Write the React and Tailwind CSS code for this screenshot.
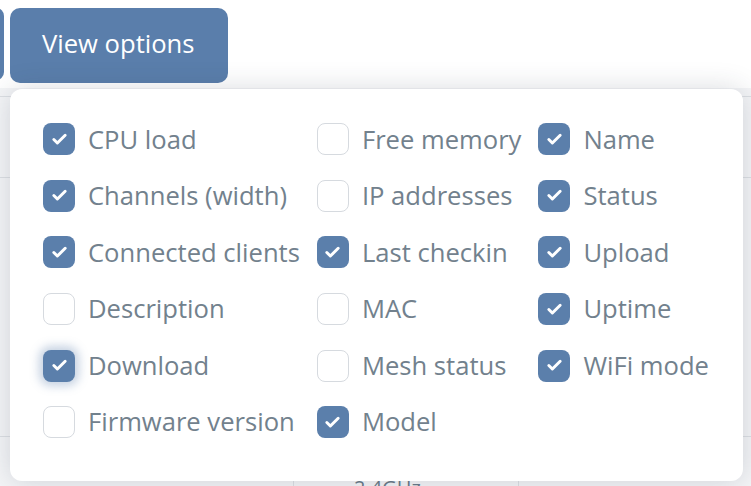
import React from "react";
import { Check } from "lucide-react";

const columns = [
  [
    { label: "CPU load", on: true },
    { label: "Channels (width)", on: true },
    { label: "Connected clients", on: true },
    { label: "Description", on: false },
    { label: "Download", on: true, focus: true },
    { label: "Firmware version", on: false },
  ],
  [
    { label: "Free memory", on: false },
    { label: "IP addresses", on: false },
    { label: "Last checkin", on: true },
    { label: "MAC", on: false },
    { label: "Mesh status", on: false },
    { label: "Model", on: true },
  ],
  [
    { label: "Name", on: true },
    { label: "Status", on: true },
    { label: "Upload", on: true },
    { label: "Uptime", on: true },
    { label: "WiFi mode", on: true },
  ],
];

function Option({ label, on, focus }) {
  return (
    <label className="flex items-center gap-[13px] h-[56.6px] whitespace-nowrap">
      <span
        className={
          on
            ? "flex items-center justify-center w-[32px] h-[32px] rounded-[8px] bg-[#5b7fab]" +
              (focus ? " shadow-[0_0_10px_4px_rgba(91,127,171,0.35)]" : "")
            : "w-[32px] h-[32px] rounded-[8px] border-[1.5px] border-[#d6dadf] bg-white"
        }
      >
        {on && <Check className="w-[17px] h-[17px] text-white" strokeWidth={4.2} />}
      </span>
      <span className="text-[25.6px] text-[#72818d] leading-none">{label}</span>
    </label>
  );
}

export default function App() {
  return (
    <div
      className="relative w-[751px] h-[486px] overflow-hidden bg-white"
      style={{ fontFamily: '"Open Sans", "Noto Sans", sans-serif' }}
    >
      {/* Toolbar */}
      <div className="flex items-start pt-[8px] h-[88px]">
        <div className="w-[100px] h-[72px] -ml-[96px] rounded-[8px] bg-[#5a7eab]" />
        <button className="ml-[6px] h-[75px] w-[218px] rounded-[10px] bg-[#5a7eab] text-white text-[25.6px] text-left pl-[32px] pb-[2px]">
          View options
        </button>
      </div>

      {/* Table behind */}
      <div className="bg-[#f4f5f7]">
        <div className="h-[9px] border-b border-[#dcdfe3]" />
        <div className="h-[81px] border-b border-[#dcdfe3]" />
        <div className="h-[259px] border-b border-[#dcdfe3]" />
        <div className="flex h-[60px] text-[20px] text-[#6b7b89]">
          <div className="w-[294px] border-r border-[#dcdfe3]" />
          <div className="w-[225px] border-r border-[#dcdfe3] pl-[60px] pt-[36px]">2.4GHz</div>
        </div>
      </div>

      {/* Dropdown panel */}
      <div className="absolute left-[10px] top-[89px] w-[733px] h-[392px] rounded-[12px] bg-white shadow-[0_0_28px_rgba(40,50,70,0.18)] pl-[33px] pt-[22px]">
        <div className="flex gap-x-[17px]">
          {columns.map((col, i) => (
            <div key={i} className="flex flex-col">
              {col.map((o) => (
                <Option key={o.label} {...o} />
              ))}
            </div>
          ))}
        </div>
      </div>
    </div>
  );
}
